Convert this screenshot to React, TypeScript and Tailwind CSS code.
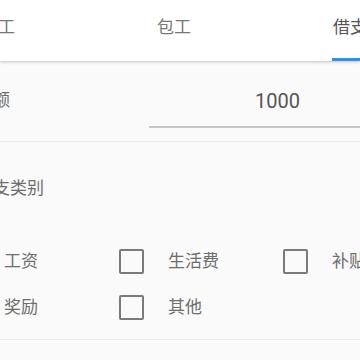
import React from "react";

const tabs = ["点工", "包工", "借支"];
const kinds = [
  ["工资", "生活费", "补贴"],
  ["奖励", "其他"],
];

function Box() {
  return <span className="block h-[25px] w-[25px] shrink-0 rounded-[2px] border-[2.5px] border-[#7a7a7a]" />;
}

export default function App() {
  return (
    <div className="relative h-[360px] w-[360px] overflow-hidden bg-[#fafafa] font-['Roboto','Noto_Sans_CJK_SC',sans-serif] text-[#6e6e6e]">
      {/* tab bar */}
      <div className="relative z-10 h-[61px] bg-white shadow-[0_1px_3px_rgba(0,0,0,0.22)]">
        <div className="-ml-[90px] flex h-full w-[528px]">
          {tabs.map((t, i) => (
            <div key={t} className="flex h-full flex-1 flex-col items-center">
              <span className={"pt-[15px] text-[17px] leading-[24px] " + (i === 2 ? "text-[#555]" : "text-[#777]")}>{t}</span>
              {i === 2 && <span className="mt-auto h-[3px] w-[36px] bg-[#2f8ff0]" />}
            </div>
          ))}
        </div>
      </div>

      <div className="-ml-[45px] w-[600px]">
        {/* amount */}
        <div className="flex border-b border-[#ebebeb] pt-[18px] pb-[13px]">
          <span className="mt-[9px] w-[194px] shrink-0 pl-[21px] text-[17px] leading-[24px]">金额</span>
          <div className="h-[49px] flex-1 border-b-2 border-[#c6c6c6] pl-[106px] pt-[10px] text-[20px] leading-[24px] text-[#555]">
            1000
          </div>
        </div>

        {/* category */}
        <div className="border-b border-[#ebebeb] pt-[34px] pb-[9px]">
          <p className="pl-[21px] text-[17px] leading-[24px]">借支类别</p>
          <div className="mt-[38px]">
            {kinds.map((row, r) => (
              <div key={r} className="flex h-[46px] items-center">
                {row.map((k) => (
                  <label key={k} className="flex w-[164px] items-center gap-[24px]">
                    <Box />
                    <span className="text-[17px] leading-[24px]">{k}</span>
                  </label>
                ))}
              </div>
            ))}
          </div>
        </div>
      </div>
    </div>
  );
}
